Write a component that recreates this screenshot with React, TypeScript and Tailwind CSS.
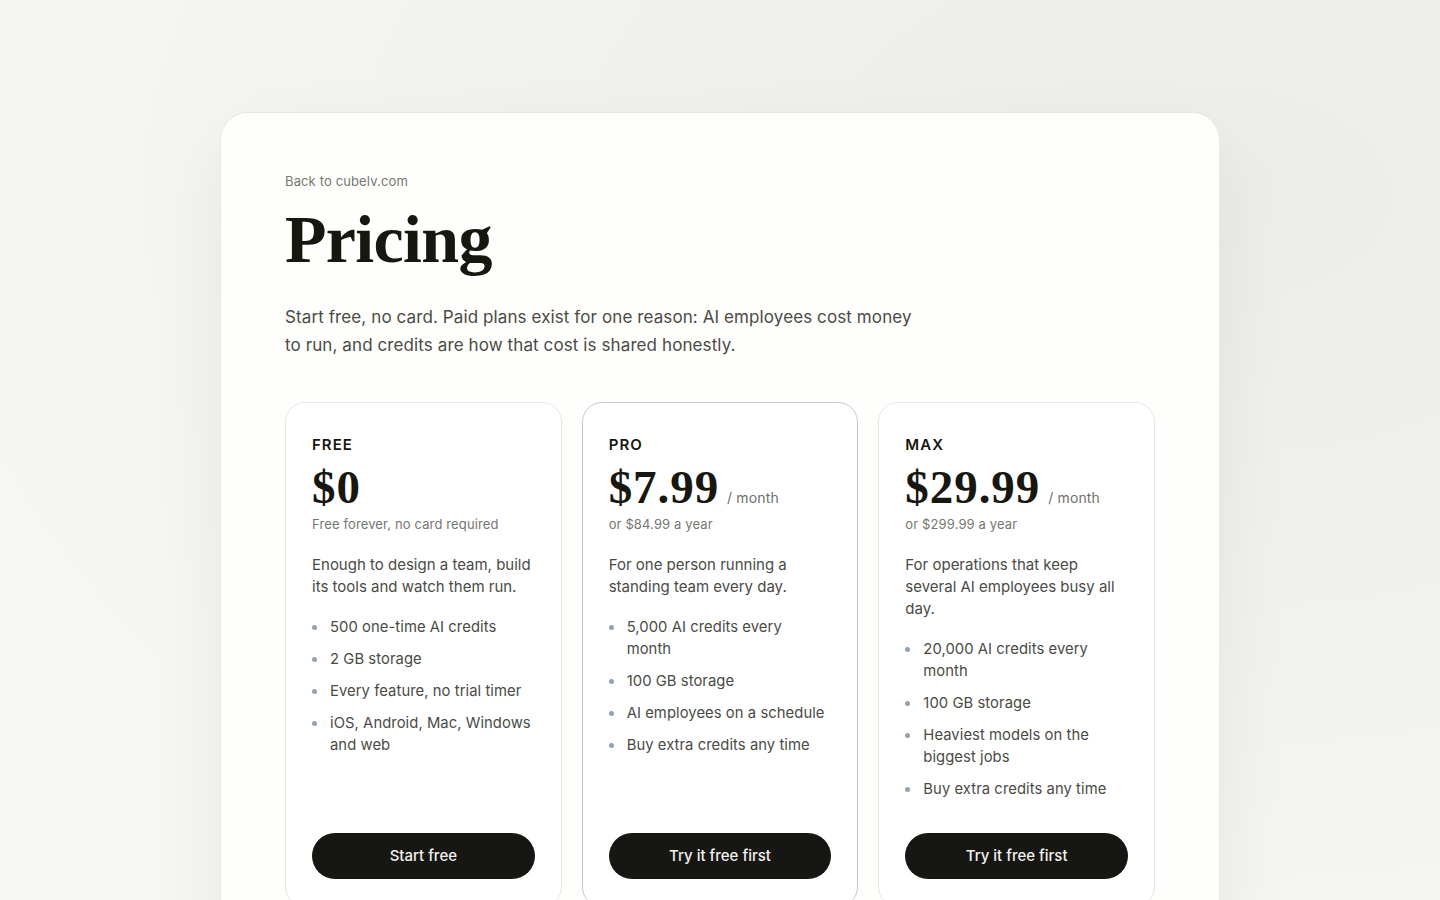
const plans = [
  {
    name: "FREE",
    price: "$0",
    per: "",
    sub: "Free forever, no card required",
    desc: "Enough to design a team, build its tools and watch them run.",
    features: [
      "500 one-time AI credits",
      "2 GB storage",
      "Every feature, no trial timer",
      "iOS, Android, Mac, Windows and web",
    ],
    cta: "Start free",
    featured: false,
  },
  {
    name: "PRO",
    price: "$7.99",
    per: "/ month",
    sub: "or $84.99 a year",
    desc: "For one person running a standing team every day.",
    features: [
      "5,000 AI credits every month",
      "100 GB storage",
      "AI employees on a schedule",
      "Buy extra credits any time",
    ],
    cta: "Try it free first",
    featured: true,
  },
  {
    name: "MAX",
    price: "$29.99",
    per: "/ month",
    sub: "or $299.99 a year",
    desc: "For operations that keep several AI employees busy all day.",
    features: [
      "20,000 AI credits every month",
      "100 GB storage",
      "Heaviest models on the biggest jobs",
      "Buy extra credits any time",
    ],
    cta: "Try it free first",
    featured: false,
  },
];

const sans = "font-['Inter','Noto_Sans',sans-serif]";
const serif = "font-['Liberation_Serif','DejaVu_Serif',serif]";

function PlanCard({ plan }: { plan: (typeof plans)[number] }) {
  return (
    <div
      className={
        "flex flex-col rounded-[20px] border bg-white px-[26px] pt-[33px] pb-[27px] " +
        (plan.featured ? "border-[#c3ccd6]" : "border-[#e6e6e3]")
      }
    >
      <p className="text-[15px] font-semibold leading-[18px] tracking-[0.07em] text-[#16170f]">
        {plan.name}
      </p>
      <div className="mt-[8px] flex items-baseline gap-[8px]">
        <span className={serif + " text-[47px] font-bold leading-[50px] tracking-[0.02em] text-[#16170f]"}>
          {plan.price}
        </span>
        {plan.per && <span className="text-[14px] tracking-[0.01em] text-[#6f706c]">{plan.per}</span>}
      </div>
      <p className="mt-[2px] text-[13px] leading-[20px] tracking-[0.01em] text-[#76776f]">{plan.sub}</p>
      <p className="mt-[20px] text-[15px] leading-[22px] text-[#4a4b45]">{plan.desc}</p>
      <ul className="mt-[18px] mb-[33px] flex flex-col gap-[10px]">
        {plan.features.map((f) => (
          <li key={f} className="flex gap-[13px] pr-[2px] text-[14.8px] leading-[22px] tracking-[0.004em] text-[#4a4b45]">
            <span className="mt-[9px] h-[5px] w-[5px] shrink-0 rounded-full bg-[#95a1b3]" />
            <span>{f}</span>
          </li>
        ))}
      </ul>
      <button className="mt-auto h-[46px] w-full rounded-full bg-[#161712] text-[15px] font-medium text-[#f2f2ee]">
        {plan.cta}
      </button>
    </div>
  );
}

export default function App() {
  return (
    <div
      className={
        sans +
        " min-h-screen overflow-hidden bg-[radial-gradient(ellipse_at_85%_20%,#ececea_0%,#f1f1ef_40%,#f6f6f3_75%)] pt-[112px]"
      }
    >
      <div className="mx-auto w-[1000px] rounded-[28px] border border-[#e7e7e4] bg-[#fefefd] px-[64px] pt-[60px] pb-[60px] shadow-[0_30px_80px_rgba(0,0,0,0.06)]">
        <a className="block text-[13px] leading-[16px] tracking-[0.01em] text-[#77786f]">Back to cubelv.com</a>
        <h1 className={serif + " mt-[10px] text-[68px] font-bold leading-[80px] tracking-[-0.01em] text-[#16170f]"}>
          Pricing
        </h1>
        <p className="mt-[24px] w-[640px] text-[17px] leading-[28px] tracking-[0.006em] text-[#4a4b45]">
          Start free, no card. Paid plans exist for one reason: AI employees cost money to run, and credits are how
          that cost is shared honestly.
        </p>
        <div className="mt-[43px] grid grid-cols-3 gap-[20px]">
          {plans.map((p) => (
            <PlanCard key={p.name} plan={p} />
          ))}
        </div>
      </div>
    </div>
  );
}
